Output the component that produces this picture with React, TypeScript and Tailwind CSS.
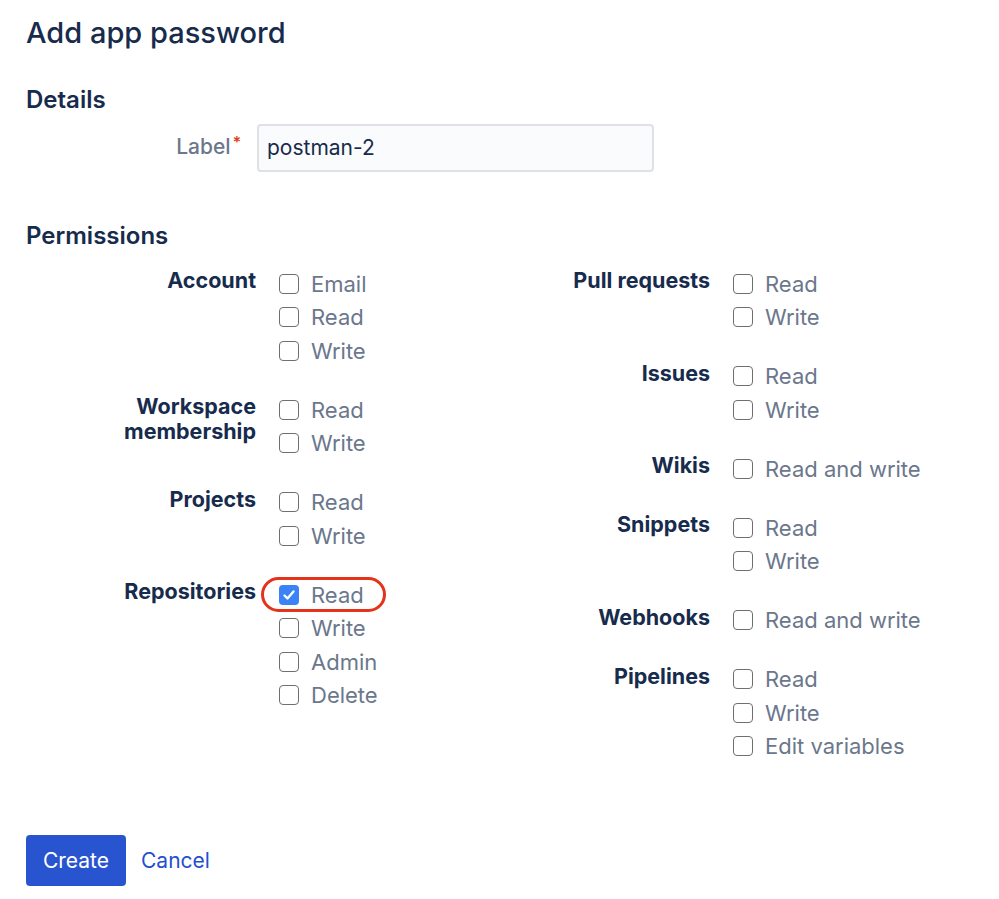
import React from "react";

type Group = { label: string; options: string[]; checked?: number };

const left: Group[] = [
  { label: "Account", options: ["Email", "Read", "Write"] },
  { label: "Workspace membership", options: ["Read", "Write"] },
  { label: "Projects", options: ["Read", "Write"] },
  { label: "Repositories", options: ["Read", "Write", "Admin", "Delete"], checked: 0 },
];

const right: Group[] = [
  { label: "Pull requests", options: ["Read", "Write"] },
  { label: "Issues", options: ["Read", "Write"] },
  { label: "Wikis", options: ["Read and write"] },
  { label: "Snippets", options: ["Read", "Write"] },
  { label: "Webhooks", options: ["Read and write"] },
  { label: "Pipelines", options: ["Read", "Write", "Edit variables"] },
];

function Box({ checked }: { checked?: boolean }) {
  if (checked) {
    return (
      <span className="flex h-[20px] w-[20px] shrink-0 items-center justify-center rounded-[4px] bg-[#3b82f6]">
        <svg width="14" height="14" viewBox="0 0 14 14" fill="none">
          <path d="M2.5 7.5 L5.5 10.5 L11.5 3.5" stroke="white" strokeWidth="2.4" strokeLinecap="round" strokeLinejoin="round" />
        </svg>
      </span>
    );
  }
  return <span className="block h-[20px] w-[20px] shrink-0 rounded-[4px] border-[1.5px] border-[#6f6f6f] bg-white" />;
}

function GroupView({ g }: { g: Group }) {
  return (
    <div className="flex">
      <div className="w-[150px] shrink-0 text-right text-[21.5px] font-bold leading-[25px] text-[#172B4D] pt-[1px]">
        {g.label}
      </div>
      <div className="ml-[23px] flex flex-col">
        {g.options.map((o, i) => (
          <div key={i} className="relative flex h-[33.5px] items-center">
            {g.checked === i && (
              <span className="absolute left-[-18px] top-[-1px] h-[35px] w-[125px] rounded-[18px] border-[3.5px] border-[#e5321b]" />
            )}
            <Box checked={g.checked === i} />
            <span className="ml-[12px] text-[22px] leading-none text-[#6B778C]">{o}</span>
          </div>
        ))}
      </div>
    </div>
  );
}

export default function App() {
  return (
    <div
      className="min-h-[899px] w-[999px] bg-white px-[26px] pt-[15px]"
      style={{ fontFamily: "Inter, 'Noto Sans', sans-serif" }}
    >
      <h1 className="text-[29px] font-medium leading-[36px] text-[#172B4D]">Add app password</h1>
      <h2 className="mt-[34px] text-[24px] font-semibold leading-[30px] text-[#172B4D]">Details</h2>
      <div className="mt-[9px] flex items-start">
        <div className="flex w-[215px] justify-end pt-[10px] text-[21px] font-medium leading-[25px] text-[#6B778C]">
          Label<span className="ml-[2px] text-[16px] leading-[16px] text-[#DE350B]">*</span>
        </div>
        <div className="ml-[16px] flex h-[48px] w-[397px] items-center rounded-[4px] border-2 border-[#DFE1E6] bg-[#FAFBFC] pl-[8px] text-[21px] text-[#172B4D]">
          postman-2
        </div>
      </div>
      <h2 className="mt-[49px] text-[24px] font-semibold leading-[30px] text-[#172B4D]">Permissions</h2>
      <div className="mt-[16px] grid grid-cols-[454px_1fr] pl-[80px]">
        <div className="flex flex-col gap-[25.5px]">
          {left.map((g) => (
            <GroupView key={g.label} g={g} />
          ))}
        </div>
        <div className="flex flex-col gap-[25.5px]">
          {right.map((g) => (
            <GroupView key={g.label} g={g} />
          ))}
        </div>
      </div>
      <div className="mt-[72px] flex items-center">
        <button className="h-[51px] w-[100px] rounded-[4px] bg-[#2954D0] text-[21px] text-white">Create</button>
        <button className="ml-[15px] text-[21px] text-[#1F50D0]">Cancel</button>
      </div>
    </div>
  );
}
